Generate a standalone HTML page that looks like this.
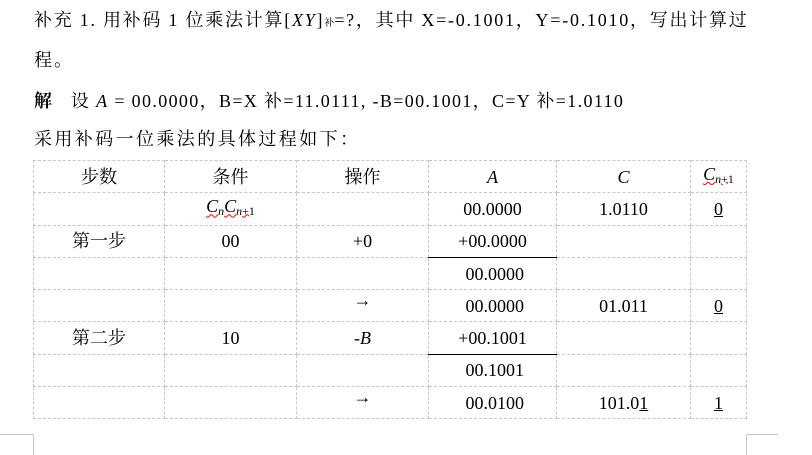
<!DOCTYPE html>
<html><head><meta charset="utf-8"><style>
body{margin:0;width:812px;height:448px;background:#fff;position:relative;overflow:hidden;font-family:"Liberation Serif","Noto Serif CJK SC",serif;color:#000;font-size:18px}
.l{position:absolute;left:34px;white-space:nowrap;line-height:24px}
i{font-style:italic}
table{position:absolute;left:33px;top:160px;border-collapse:collapse;table-layout:fixed}
td{border:1px dashed #c8c8c8;height:31.3px;padding:0;text-align:center;font-size:18px;line-height:20px;vertical-align:middle}
.u{text-decoration:underline}
.bl{border-bottom:1.5px solid #000}
sub{font-size:12px;vertical-align:-3px}
.wv{text-decoration:underline wavy red;text-decoration-thickness:1px}
.ar{position:relative;top:-6px}
</style></head><body>
<div class="l" style="top:8px;letter-spacing:1.75px">补充 1. 用补码 1 位乘法计算[<i>XY</i>]<span style="font-size:10px;letter-spacing:0">补</span>=?，其中 X=-0.1001，Y=-0.1010，写出计算过</div>
<div class="l" style="top:48px;letter-spacing:2px">程。</div>
<div class="l" style="top:89px;letter-spacing:1.35px"><b>解</b>&nbsp;&nbsp; 设 <i>A</i> = 00.0000，B=X 补=11.0111, -B=00.1001，C=Y 补=1.0110</div>
<div class="l" style="top:127px;letter-spacing:2.4px">采用补码一位乘法的具体过程如下：</div>
<table>
<colgroup><col style="width:131px"><col style="width:132px"><col style="width:132px"><col style="width:128px"><col style="width:134px"><col style="width:56px"></colgroup>
<tr><td>步数</td><td>条件</td><td>操作</td><td><i>A</i></td><td><i>C</i></td><td><span class="wv"><i>C</i><sub><i>n</i>+1</sub></span></td></tr>
<tr><td></td><td><span class="wv"><i>C<sub>n</sub>C</i><sub><i>n</i>+1</sub></span></td><td></td><td>00.0000</td><td>1.0110</td><td><span class="u">0</span></td></tr>
<tr><td>第一步</td><td>00</td><td>+0</td><td class="bl">+00.0000</td><td></td><td></td></tr>
<tr><td></td><td></td><td></td><td>&nbsp;00.0000</td><td></td><td></td></tr>
<tr><td></td><td></td><td><span class="ar">→</span></td><td>&nbsp;00.0000</td><td>01.011</td><td><span class="u">0</span></td></tr>
<tr><td>第二步</td><td>10</td><td>-<i>B</i></td><td class="bl">+00.1001</td><td></td><td></td></tr>
<tr><td></td><td></td><td></td><td>&nbsp;00.1001</td><td></td><td></td></tr>
<tr><td></td><td></td><td><span class="ar">→</span></td><td>&nbsp;00.0100</td><td>101.0<span class="u">1</span></td><td><span class="u">1</span></td></tr>
</table>
<div style="position:absolute;left:0;top:434px;width:33px;height:20px;border-top:1px solid #c8c8c8;border-right:1px solid #c8c8c8"></div>
<div style="position:absolute;left:746px;top:434px;width:31px;height:20px;border-top:1px solid #c8c8c8;border-left:1px solid #c8c8c8"></div>
</body></html>
